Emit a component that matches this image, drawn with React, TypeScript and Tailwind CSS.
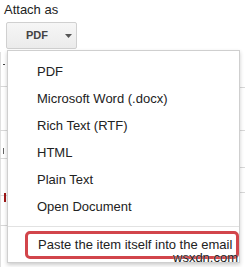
import React from "react";

const items = ["PDF", "Microsoft Word (.docx)", "Rich Text (RTF)", "HTML", "Plain Text", "Open Document"];

export default function App() {
  return (
    <div className="relative w-[245px] h-[267px] overflow-hidden bg-white text-[#222]" style={{ fontFamily: '"Liberation Sans", Arial, sans-serif' }}>
      {/* background page fragments */}
      <div className="absolute left-0 top-[52px] w-px h-[215px] bg-[#e0e0e0]" />
      {[86, 130, 158, 195, 225].map((y) => (
        <div key={y} className="absolute left-0 w-[8px] h-px bg-[#d8d8d8]" style={{ top: y }} />
      ))}
      {[87, 130, 167, 192].map((y) => (
        <div key={"r" + y} className="absolute right-0 w-[6px] h-px bg-[#d8d8d8]" style={{ top: y }} />
      ))}
      <div className="absolute left-[3px] top-[64px] w-[2px] h-px bg-[#444]" />
      <div className="absolute left-[3px] top-[148px] w-px h-[6px] bg-[#666]" />
      <div className="absolute left-[4px] top-[193px] w-[2px] h-[9px] bg-[#a01818]" />

      <div className="pl-[4px] pt-[2px] text-[13px] leading-[15px]">Attach as</div>
      <div className="ml-[6px] mt-[5px] w-[71px] h-[27px] rounded-[2px] border border-[#d0d0d0] bg-gradient-to-b from-[#f6f6f6] to-[#ebebeb] flex items-center">
        <span className="ml-[19px] text-[11px] font-bold text-[#444]">PDF</span>
        <svg className="ml-[17px]" width="7" height="4" viewBox="0 0 7 4"><path d="M0 0H7L3.5 4Z" fill="#555" /></svg>
      </div>

      <div className="absolute left-[7px] top-[50px] w-[233px] h-[213px] bg-white border border-[#cfcfcf] shadow-[0_2px_4px_rgba(0,0,0,0.2)]">
        <div className="pt-[7px]">
          {items.map((t) => (
            <div key={t} className="h-[27px] flex items-center pl-[29px] text-[13px]">{t}</div>
          ))}
        </div>
        <div className="mt-[6px] h-px bg-[#e2e2e2]" />
        <div className="ml-[17px] mt-[4px] w-[214px] h-[28px] rounded-[5px] border-[3px] border-[#d2454b] flex items-center pl-[10px] text-[13px]">
          Paste the item itself into the email
        </div>
      </div>

      <div className="absolute left-[173px] top-[251px] text-[13px] leading-[14px] text-[#1a1a1a]" style={{ textShadow: "0 0 1px #fff" }}>wsxdn.com</div>
    </div>
  );
}
